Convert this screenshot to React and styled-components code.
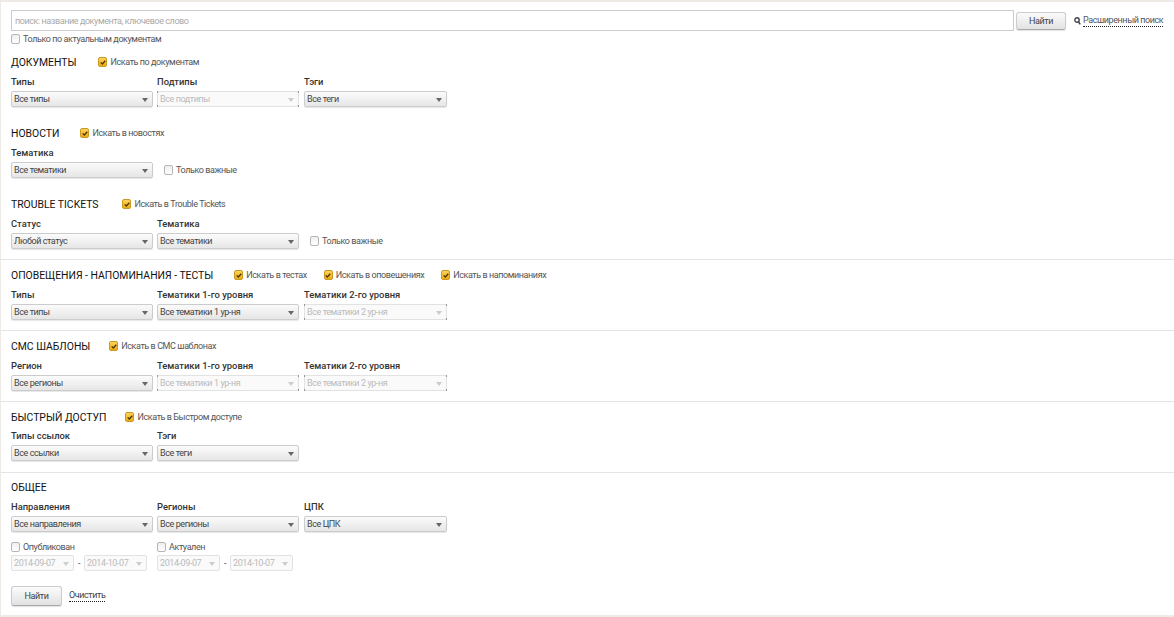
import React from "react";
import styled, { createGlobalStyle, css } from "styled-components";

const GlobalStyle = createGlobalStyle`
  html, body {
    margin: 0;
    padding: 0;
    background: #eeebe6;
  }
  body {
    font-family: "Roboto", "Liberation Sans", sans-serif;
    font-size: 9px;
    letter-spacing: -0.42px;
    color: #444;
  }
`;

const Page = styled.div`
  margin: 2px 0 0 1px;
  height: 613px;
  box-sizing: border-box;
  background: #fff;
  overflow: hidden;
`;

const SearchBar = styled.div`
  display: flex;
  align-items: center;
  padding: 8px 0 0 10px;
  height: 21px;
`;

const SearchInput = styled.input`
  box-sizing: border-box;
  flex: none;
  width: 1003px;
  height: 21px;
  padding: 0 3px;
  border: 1px solid #ccc;
  font: inherit;
  letter-spacing: inherit;
  color: #444;
  outline: none;
  &::placeholder {
    color: #aaa;
    opacity: 1;
  }
`;

const Button = styled.button`
  box-sizing: border-box;
  flex: none;
  width: ${(p) => p.$width}px;
  height: ${(p) => p.$height}px;
  margin-left: ${(p) => p.$gap || 0}px;
  padding: 0;
  border: 1px solid #ccc;
  border-bottom-color: #aaa;
  border-radius: 3px;
  background: linear-gradient(#fbfbfb, #e2e2e2);
  box-shadow: 0 1px 1px rgba(0, 0, 0, 0.12);
  font: inherit;
  letter-spacing: inherit;
  color: #444;
`;

const AdvancedLink = styled.a`
  display: flex;
  align-items: center;
  gap: 2px;
  margin-left: 8px;
  color: #555;
  white-space: nowrap;
  svg {
    display: block;
  }
  span {
    border-bottom: 1px dotted #222;
    line-height: 11px;
  }
`;

const OnlyActual = styled.div`
  padding-left: 10px;
  height: 15px;
  display: flex;
  align-items: center;
`;

const Section = styled.section`
  box-sizing: border-box;
  height: ${(p) => p.$height || 71}px;
  padding: ${(p) => p.$top || 9}px 0 0 10px;
  border-top: ${(p) => (p.$divider ? "1px solid #e4e4e4" : "none")};
`;

const HeadRow = styled.div`
  display: flex;
  align-items: center;
  height: 14px;
  gap: 17px;
`;

const Title = styled.h2`
  margin: 0 ${(p) => p.$after || 0}px 0 0;
  font-size: 10.4px;
  letter-spacing: 0;
  font-weight: 400;
  color: #111;
  text-transform: uppercase;
  white-space: nowrap;
`;

const Fields = styled.div`
  display: grid;
  grid-template-columns: 141px 142px 143px auto;
  column-gap: 5px;
  align-items: end;
  margin-top: ${(p) => p.$top || 7}px;
  > :first-child {
    margin-right: -1px;
  }
`;

const Label = styled.div`
  height: 12px;
  line-height: 12px;
  margin-bottom: 3px;
  font-size: 9.4px;
  letter-spacing: 0;
  font-weight: 500;
  color: #333;
  white-space: nowrap;
`;

const SelectWrap = styled.div`
  position: relative;
  height: 16px;
  width: ${(p) => (p.$width ? `${p.$width}px` : "100%")};
  &::after {
    content: "";
    position: absolute;
    right: 5px;
    top: 7px;
    border: 3px solid transparent;
    border-top: 4px solid ${(p) => (p.$off ? "#ccc" : "#666")};
    border-bottom: 0;
  }
  ${(p) =>
    p.$off &&
    !p.$width &&
    css`
      &::before {
        content: "";
        position: absolute;
        inset: 0;
        background:
          linear-gradient(#999, #999) 0 0 / 1px 2px no-repeat,
          linear-gradient(#999, #999) 100% 0 / 1px 2px no-repeat,
          linear-gradient(#999, #999) 0 100% / 1px 2px no-repeat,
          linear-gradient(#999, #999) 100% 100% / 1px 2px no-repeat;
      }
    `}
`;

const disabledSelect = css`
  border-color: #e2e2e2;
  background: #fafafa;
  color: #bbb;
  box-shadow: none;
  opacity: 1;
`;

const Select = styled.select`
  appearance: none;
  box-sizing: border-box;
  display: block;
  width: 100%;
  height: 16px;
  padding: 0 10px 0 2px;
  border: 1px solid #ccc;
  border-radius: 2px;
  background: linear-gradient(#fbfbfb, #e6e6e6);
  box-shadow: 0 1px 1px rgba(0, 0, 0, 0.1);
  font: inherit;
  letter-spacing: inherit;
  color: #444;
  outline: none;
  ${(p) => p.disabled && disabledSelect}
`;

const CheckLabel = styled.label`
  display: inline-flex;
  align-items: center;
  gap: 3px;
  color: #555;
  white-space: nowrap;
  height: ${(p) => (p.$tall ? "16px" : "auto")};
  margin-left: ${(p) => p.$indent || 0}px;
`;

const Box = styled.span`
  box-sizing: border-box;
  display: flex;
  align-items: center;
  justify-content: center;
  width: 9px;
  height: 10px;
  border: 1px solid ${(p) => (p.$on ? "#c99a22" : "#b5b5b5")};
  border-radius: 2px;
  background: ${(p) => (p.$on ? "linear-gradient(#fdd35a, #eeaa12)" : "linear-gradient(#eee, #fff)")};
`;

const DateRow = styled.div`
  display: flex;
  align-items: center;
  gap: 4px;
  margin-top: 1px;
`;

const Dash = styled.span`
  color: #444;
`;

const ActionRow = styled.div`
  display: flex;
  align-items: center;
  gap: 7px;
  margin-top: 15px;
`;

const ClearLink = styled.a`
  color: #444;
  border-bottom: 1px dotted #222;
  line-height: 11px;
`;

const Check = ({ on, children, tall, indent }) => (
  <CheckLabel $tall={tall} $indent={indent}>
    <Box $on={on}>
      {on && (
        <svg width="6" height="5" viewBox="0 0 6 5">
          <path d="M0.7 2.4 L2.3 4 L5.3 0.8" fill="none" stroke="#4a3500" strokeWidth="1.3" />
        </svg>
      )}
    </Box>
    {children}
  </CheckLabel>
);

const Dropdown = ({ value, disabled, width }) => (
  <SelectWrap $off={disabled} $width={width}>
    <Select disabled={disabled} defaultValue={value}>
      <option>{value}</option>
    </Select>
  </SelectWrap>
);

const SelectField = ({ label, value, disabled }) => (
  <div>
    <Label>{label}</Label>
    <Dropdown value={value} disabled={disabled} />
  </div>
);

const DateRange = ({ label }) => (
  <div>
    <Check>{label}</Check>
    <DateRow>
      <Dropdown value="2014-09-07" disabled width={63} />
      <Dash>-</Dash>
      <Dropdown value="2014-10-07" disabled width={63} />
    </DateRow>
  </div>
);

export default function App() {
  return (
    <Page>
      <GlobalStyle />
      <SearchBar>
        <SearchInput placeholder="поиск: название документа, ключевое слово" />
        <Button $width={50} $height={18} $gap={2}>
          Найти
        </Button>
        <AdvancedLink>
          <svg width="7" height="8" viewBox="0 0 7 8">
            <circle cx="3" cy="3" r="2.2" fill="none" stroke="#444" strokeWidth="1.4" />
            <path d="M4.4 4.8 L6.2 7.4" stroke="#444" strokeWidth="1.5" />
          </svg>
          <span>Расширенный поиск</span>
        </AdvancedLink>
      </SearchBar>
      <OnlyActual>
        <Check>Только по актуальным документам</Check>
      </OnlyActual>

      <Section>
        <HeadRow>
          <Title $after={5}>Документы</Title>
          <Check on>Искать по документам</Check>
        </HeadRow>
        <Fields>
          <SelectField label="Типы" value="Все типы" />
          <SelectField label="Подтипы" value="Все подтипы" disabled />
          <SelectField label="Тэги" value="Все теги" />
        </Fields>
      </Section>

      <Section>
        <HeadRow>
          <Title $after={4}>Новости</Title>
          <Check on>Искать в новостях</Check>
        </HeadRow>
        <Fields>
          <SelectField label="Тематика" value="Все тематики" />
          <Check tall indent={7}>Только важные</Check>
        </Fields>
      </Section>

      <Section>
        <HeadRow>
          <Title $after={7}>Trouble Tickets</Title>
          <Check on>Искать в Trouble Tickets</Check>
        </HeadRow>
        <Fields>
          <SelectField label="Статус" value="Любой статус" />
          <SelectField label="Тематика" value="Все тематики" />
          <Check tall indent={6}>Только важные</Check>
        </Fields>
      </Section>

      <Section $divider $top={8}>
        <HeadRow>
          <Title $after={4}>Оповещения - напоминания - тесты</Title>
          <Check on>Искать в тестах</Check>
          <Check on>Искать в оповешениях</Check>
          <Check on>Искать в напоминаниях</Check>
        </HeadRow>
        <Fields>
          <SelectField label="Типы" value="Все типы" />
          <SelectField label="Тематики 1-го уровня" value="Все тематики 1 ур-ня" />
          <SelectField label="Тематики 2-го уровня" value="Все тематики 2 ур-ня" disabled />
        </Fields>
      </Section>

      <Section $divider $top={8}>
        <HeadRow>
          <Title $after={2}>СМС шаблоны</Title>
          <Check on>Искать в СМС шаблонах</Check>
        </HeadRow>
        <Fields>
          <SelectField label="Регион" value="Все регионы" />
          <SelectField label="Тематики 1-го уровня" value="Все тематики 1 ур-ня" disabled />
          <SelectField label="Тематики 2-го уровня" value="Все тематики 2 ур-ня" disabled />
        </Fields>
      </Section>

      <Section $divider $top={8}>
        <HeadRow>
          <Title $after={2}>Быстрый доступ</Title>
          <Check on>Искать в Быстром доступе</Check>
        </HeadRow>
        <Fields $top={6}>
          <SelectField label="Типы ссылок" value="Все ссылки" />
          <SelectField label="Тэги" value="Все теги" />
        </Fields>
      </Section>

      <Section $divider $top={7} $height={143}>
        <HeadRow>
          <Title>Общее</Title>
        </HeadRow>
        <Fields>
          <SelectField label="Направления" value="Все направления" />
          <SelectField label="Регионы" value="Все регионы" />
          <SelectField label="ЦПК" value="Все ЦПК" />
        </Fields>
        <Fields $top={10}>
          <DateRange label="Опубликован" />
          <DateRange label="Актуален" />
        </Fields>
        <ActionRow>
          <Button $width={51} $height={20}>Найти</Button>
          <ClearLink>Очистить</ClearLink>
        </ActionRow>
      </Section>
    </Page>
  );
}
